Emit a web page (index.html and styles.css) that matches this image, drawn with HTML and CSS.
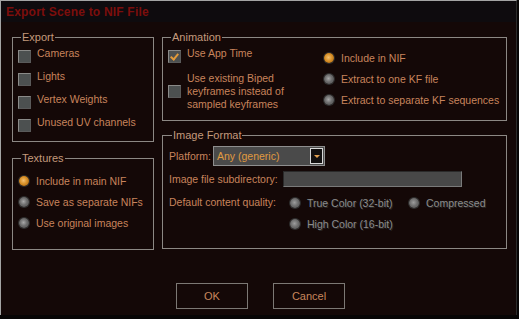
FILE: index.html
```html
<!DOCTYPE html>
<html lang="en">
<head>
    <meta charset="UTF-8">
    <title>Export Scene to NIF File</title>
    <link rel="stylesheet" href="styles.css">
</head>
<body>
<div class="window">
    <div class="titlebar">Export Scene to NIF File</div>

    <div class="content">
        <div class="col-left">
            <fieldset class="group export">
                <legend>Export</legend>
                <div class="row"><span class="check"></span>Cameras</div>
                <div class="row"><span class="check"></span>Lights</div>
                <div class="row"><span class="check"></span>Vertex Weights</div>
                <div class="row"><span class="check"></span>Unused UV channels</div>
            </fieldset>
            <fieldset class="group textures">
                <legend>Textures</legend>
                <div class="rrow"><span class="radio on"></span>Include in main NIF</div>
                <div class="rrow"><span class="radio"></span>Save as separate NIFs</div>
                <div class="rrow"><span class="radio"></span>Use original images</div>
            </fieldset>
        </div>

        <div class="col-right">
            <fieldset class="group animation">
                <legend>Animation</legend>
                <div class="anim-cols">
                    <div class="anim-left">
                        <div class="row"><span class="check checked"></span>Use App Time</div>
                        <div class="row biped"><span class="check"></span>
                            <span>Use existing Biped<br>keyframes instead of<br>sampled keyframes</span></div>
                    </div>
                    <div class="anim-right">
                        <div class="rrow"><span class="radio on"></span>Include in NIF</div>
                        <div class="rrow"><span class="radio"></span>Extract to one KF file</div>
                        <div class="rrow"><span class="radio"></span>Extract to separate KF sequences</div>
                    </div>
                </div>
            </fieldset>
            <fieldset class="group image">
                <legend>Image Format</legend>
                <div class="platform">
                    <span class="lbl">Platform:</span>
                    <div class="select">
                        <span>Any (generic)</span>
                        <span class="drop"><span class="arrow"></span></span>
                    </div>
                </div>
                <div class="subdir">
                    <span class="lbl">Image file subdirectory:</span>
                    <div class="field"></div>
                </div>
                <div class="quality">
                    <span class="lbl">Default content quality:</span>
                    <div class="qgrid">
                        <div class="rrow off"><span class="radio"></span>True Color (32-bit)</div>
                        <div class="rrow off"><span class="radio"></span>Compressed</div>
                        <div class="rrow off"><span class="radio"></span>High Color (16-bit)</div>
                    </div>
                </div>
            </fieldset>
        </div>
    </div>

    <div class="buttons">
        <div class="btn">OK</div>
        <div class="btn">Cancel</div>
    </div>
</div>
</body>
</html>
```

FILE: styles.css
```css
body{
    margin: 0;
    background: #070505;
    font-family: "Liberation Sans", Arial, sans-serif;
    font-size: 10.5px;
    color: #c8845c;
}
.window{
    width: 515px;
    height: 314px;
    background: #140807;
    border-top: 1px solid #a4a4a4;
    border-left: 1px solid #a4a4a4;
    border-right: 1px solid #2c2c2c;
    box-sizing: content-box;
}
.titlebar{
    height: 21px;
    line-height: 22px;
    padding-left: 5px;
    background: #0e0b0e;
    color: #7c0e0c;
    font-weight: bold;
    font-size: 12px;
    letter-spacing: 0.2px;
}
.content{
    display: flex;
    gap: 8px;
    padding: 9px 0 0 11px;
    white-space: nowrap;
}
.col-left{
    width: 142px;
}
.col-right{
    width: 345px;
}
.group{
    margin: 0;
    padding: 0 0 0 5px;
    border: 1px solid #8c8884;
    box-sizing: border-box;
}
.group legend{
    padding: 0 1px;
    margin-left: 3px;
    line-height: 13px;
    font-size: 11px;
    color: #c49a7c;
}
.export{ height: 111px; }
.export .row:first-of-type{ margin-top: -3px; }
.textures{ height: 98px; margin-top: 10px; padding-top: 5px; }
.animation{ height: 90px; }
.image{ height: 120px; margin-top: 8px; padding: 4px 0 0 6px; }

.row{
    display: flex;
    align-items: center;
    height: 23px;
}
.check{
    width: 11px;
    height: 11px;
    margin: 8px 6px 0 0;
    background: #4c5050;
    border: 1px solid #8a8a88;
    border-right-color: #5a5a5a;
    border-bottom-color: #5a5a5a;
    flex: none;
    position: relative;
}
.check.checked::after{
    content: "";
    position: absolute;
    left: 3px;
    top: 1px;
    width: 3px;
    height: 6px;
    border: solid #e29a3a;
    border-width: 0 2px 2px 0;
    transform: rotate(40deg);
}
.rrow{
    display: flex;
    align-items: center;
    height: 21px;
}
.radio{
    width: 10px;
    height: 10px;
    border-radius: 50%;
    margin: 0 7px 0 1px;
    flex: none;
    background: radial-gradient(circle at 45% 45%, #a8a8a8 0, #6c6c6c 45%, #4a4a4a 100%);
    box-shadow: 0 0 0 1px #2e2e2e;
}
.radio.on{
    background: radial-gradient(circle at 45% 45%, #f4c070 0, #d89028 45%, #9a5a10 100%);
}

.anim-cols{
    display: flex;
}
.anim-left{
    width: 155px;
}
.anim-left .row:first-child{
    margin-top: -3px;
}
.biped{
    height: auto;
    line-height: 13px;
    margin-top: 8px;
}
.biped .check{
    margin-top: 0;
}
.anim-right{
    padding-top: 3px;
}

.platform, .subdir, .quality{
    display: flex;
    align-items: center;
}
.platform{
    height: 20px;
}
.platform .lbl{
    width: 44px;
}
.select{
    width: 112px;
    height: 20px;
    box-sizing: border-box;
    background: #4a4a4a;
    border: 1px solid #8e8e8e;
    display: flex;
    align-items: center;
    justify-content: space-between;
    padding-left: 3px;
    color: #e09a40;
}
.drop{
    width: 13px;
    height: 16px;
    margin-right: 1px;
    box-sizing: border-box;
    background: #121010;
    border: 1px solid #d8d8d8;
    display: flex;
    align-items: center;
    justify-content: center;
}
.arrow{
    width: 0;
    height: 0;
    border-style: solid;
    border-width: 3px 3px 0 3px;
    border-color: #e2a050 transparent transparent transparent;
}
.subdir{
    height: 26px;
}
.subdir .lbl{
    width: 114px;
}
.field{
    width: 179px;
    height: 16px;
    box-sizing: border-box;
    background: #484848;
    border: 1px solid #2a2a2a;
    border-right-color: #7a7a7a;
    border-bottom-color: #7a7a7a;
}
.quality{
    align-items: flex-start;
}
.quality .lbl{
    width: 120px;
    line-height: 21px;
}
.qgrid{
    display: grid;
    grid-template-columns: 119px auto;
}
.rrow.off{
    color: #8c8c8c;
    text-shadow: 1px 1px 0 #2a2a2a;
}
.rrow.off .radio{
    background: radial-gradient(circle at 45% 45%, #9c9c9c 0, #6a6a6a 50%, #505050 100%);
}

.buttons{
    display: flex;
    gap: 25px;
    padding: 33px 0 0 175px;
}
.btn{
    width: 72px;
    height: 26px;
    box-sizing: border-box;
    border: 1px solid #7c7874;
    display: flex;
    align-items: center;
    justify-content: center;
    font-size: 11px;
    color: #c8865c;
}
```
